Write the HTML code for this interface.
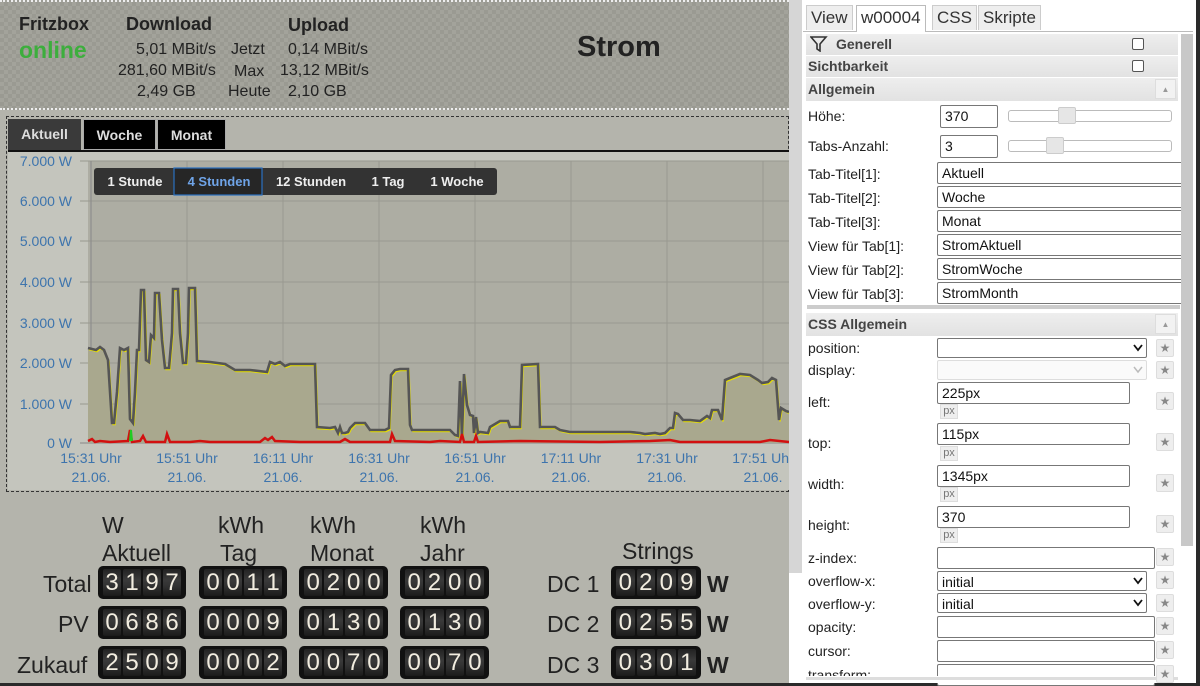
<!DOCTYPE html>
<html><head><meta charset="utf-8"><style>
*{box-sizing:border-box;margin:0;padding:0}
body{width:1200px;height:683px;overflow:hidden;background:#2a2a2a;font-family:"Liberation Sans",sans-serif;position:relative}
.abs{position:absolute}
#left{left:0;top:0;width:789px;height:683px;background:#b4b4ac}
#hdr{left:0;top:0;width:789px;height:110px;background-color:#a3a39b;background-image:linear-gradient(45deg,#9a9a92 25%,transparent 25%,transparent 75%,#9a9a92 75%),linear-gradient(45deg,#9a9a92 25%,transparent 25%,transparent 75%,#9a9a92 75%);background-size:8px 8px;background-position:0 0,4px 4px;border-top:2px dotted #eee;border-bottom:2px dotted #eee}
.t{position:absolute;white-space:nowrap;color:#222}
.b{font-weight:bold}
.tab{position:absolute;top:119px;height:31px;color:#ddd;font-weight:bold;font-size:14px;line-height:31px;text-align:center}
.cnt{position:absolute;height:33px;background:#111;border-radius:5px;display:flex;padding:3px 4px;gap:0}
.cnt span{flex:1;color:#f2ede0;font-size:24px;line-height:27px;text-align:center;background:linear-gradient(#222,#3a3a3a 40%,#333 60%,#1a1a1a);margin:0 1px;border-radius:2px}
.lbl{position:absolute;font-size:23px;color:#222;text-align:right;white-space:nowrap}
#rp{left:789px;top:0;width:407px;height:683px;background:#fff}
.rl{position:absolute;left:808px;font-size:14px;color:#222;white-space:nowrap}
.in{position:absolute;border:1px solid #777;border-radius:2px;background:#fff;font-size:14px;padding-left:4px;line-height:20px;height:22px;color:#111}
.sec{position:absolute;left:806px;width:372px;background:linear-gradient(#eee,#e2e2e2);font-weight:bold;font-size:14px;color:#444;padding-left:2px}
.star{position:absolute;left:1156px;width:18px;height:18px;border:1px solid #ddd;background:#eee;border-radius:2px;color:#888;font-size:12px;text-align:center;line-height:16px}
.px{position:absolute;left:940px;width:18px;height:15px;background:#eee;border:1px solid #ddd;font-size:11px;color:#777;text-align:center;line-height:13px}
.rtab{position:absolute;top:5px;height:25px;border:1px solid #ccc;border-bottom:none;background:#eee;font-size:17px;line-height:24px;padding:0 4px;color:#333}
</style></head><body>
<div id="left" class="abs"></div>
<div id="hdr" class="abs"></div>
<div class="t b" style="left:19px;top:14px;font-size:18px">Fritzbox</div>
<div class="t b" style="left:19px;top:37px;font-size:23px;color:#3dae3d">online</div>
<div class="t b" style="left:126px;top:14px;font-size:18px">Download</div>
<div class="t b" style="left:288px;top:15px;font-size:18px">Upload</div>
<div class="t" style="left:136px;top:41px;font-size:16px">5,01 MBit/s</div>
<div class="t" style="left:231px;top:41px;font-size:16px">Jetzt</div>
<div class="t" style="left:288px;top:41px;font-size:16px">0,14 MBit/s</div>
<div class="t" style="left:118px;top:62px;font-size:16px">281,60 MBit/s</div>
<div class="t" style="left:234px;top:63px;font-size:16px">Max</div>
<div class="t" style="left:280px;top:62px;font-size:16px">13,12 MBit/s</div>
<div class="t" style="left:137px;top:83px;font-size:16px">2,49 GB</div>
<div class="t" style="left:228px;top:83px;font-size:16px">Heute</div>
<div class="t" style="left:288px;top:83px;font-size:16px">2,10 GB</div>
<div class="t b" style="left:577px;top:31px;font-size:29px">Strom</div>
<div class="abs" style="left:6px;top:116px;width:783px;height:376px;border:1px dashed #333"></div>
<div class="tab" style="left:8px;width:73px;background:#3a3a3a">Aktuell</div>
<div class="tab" style="left:83px;width:73px;background:#000;border:1px solid #aaa">Woche</div>
<div class="tab" style="left:157px;width:69px;background:#000;border:1px solid #aaa">Monat</div>
<div class="abs" style="left:8px;top:150px;width:781px;height:2px;background:#111"></div>
<svg class="abs" style="left:8px;top:152px" width="781" height="338" viewBox="8 152 781 338">
<rect x="8" y="152" width="781" height="338" fill="#c4c5bd"/>
<rect x="88" y="161" width="701" height="282" fill="#adada3"/>
<g stroke="#999990" stroke-width="1">
<line x1="80" y1="161" x2="789" y2="161"/><line x1="80" y1="201" x2="789" y2="201"/><line x1="80" y1="241" x2="789" y2="241"/><line x1="80" y1="282" x2="789" y2="282"/><line x1="80" y1="323" x2="789" y2="323"/><line x1="80" y1="363" x2="789" y2="363"/><line x1="80" y1="404" x2="789" y2="404"/>
<line x1="187" y1="161" x2="187" y2="443"/><line x1="283" y1="161" x2="283" y2="443"/><line x1="379" y1="161" x2="379" y2="443"/><line x1="475" y1="161" x2="475" y2="443"/><line x1="571" y1="161" x2="571" y2="443"/><line x1="667" y1="161" x2="667" y2="443"/><line x1="763" y1="161" x2="763" y2="443"/>
</g>
<line x1="91" y1="161" x2="91" y2="443" stroke="#888" />
<line x1="80" y1="443" x2="789" y2="443" stroke="#888"/>
<path id="p" d="M88,348 L96,350 100,347 104,350 108,360 112,423 114,423 117,392 120,348 124,350 128,348 130,419 133,423 135,392 137,350 139,350 141,290 144,290 146,360 149,362 151,335 154,338 155,293 159,293 162,340 165,368 169,368 172,333 173,289 178,289 180,333 183,363 186,363 188,333 189,288 195,288 197,361 210,362 225,364 235,370 250,370 267,372 270,362 275,364 280,362 285,366 290,364 315,364 317,427 330,428 335,427 338,433 340,427 342,433 345,433 348,432 350,428 355,423 365,423 370,430 385,430 389,428 391,375 395,370 400,369 408,369 410,425 412,430 450,430 455,435 458,436 460,381 462,436 464,374 467,405 470,415 473,416 474,433 476,417 478,433 480,432 488,433 490,427 500,421 508,421 510,427 520,427 522,365 538,364 540,427 555,427 560,430 570,432 600,432 630,432 640,433 645,434 655,433 660,434 665,433 670,428 673,428 675,413 678,414 683,420 690,420 700,421 707,416 710,418 712,410 718,410 722,420 725,380 730,378 740,374 750,375 758,380 762,383 768,382 772,378 776,380 779,420 781,408 786,411 789,412" fill="none"/>
<path d="M88,348 L96,350 100,347 104,350 108,360 112,423 114,423 117,392 120,348 124,350 128,348 130,419 133,423 135,392 137,350 139,350 141,290 144,290 146,360 149,362 151,335 154,338 155,293 159,293 162,340 165,368 169,368 172,333 173,289 178,289 180,333 183,363 186,363 188,333 189,288 195,288 197,361 210,362 225,364 235,370 250,370 267,372 270,362 275,364 280,362 285,366 290,364 315,364 317,427 330,428 335,427 338,433 340,427 342,433 345,433 348,432 350,428 355,423 365,423 370,430 385,430 389,428 391,375 395,370 400,369 408,369 410,425 412,430 450,430 455,435 458,436 460,381 462,436 464,374 467,405 470,415 473,416 474,433 476,417 478,433 480,432 488,433 490,427 500,421 508,421 510,427 520,427 522,365 538,364 540,427 555,427 560,430 570,432 600,432 630,432 640,433 645,434 655,433 660,434 665,433 670,428 673,428 675,413 678,414 683,420 690,420 700,421 707,416 710,418 712,410 718,410 722,420 725,380 730,378 740,374 750,375 758,380 762,383 768,382 772,378 776,380 779,420 781,408 786,411 789,412 L789,443 L88,443Z" fill="#a9a88e"/>
<use href="#p" stroke="#e8e000" stroke-width="1.5" transform="translate(1,1.5)"/>
<use href="#p" stroke="#555" stroke-width="2.6"/>
<path d="M88,441 L92,439 95,442 100,441 110,442 128,441 130,430 132,442 140,441 143,436 146,442 165,442 167,434 170,442 190,442 200,441 210,442 260,442 265,438 268,440 272,437 275,441 300,442 340,442 345,439 350,442 390,442 392,434 395,441 430,442 440,441 460,442 462,434 464,442 474,442 476,436 478,442 520,441 600,442 650,441 670,440 680,442 760,442 770,440 789,442" fill="none" stroke="#d21010" stroke-width="2.5"/>
<path d="M130,441 L131,430 132,441" stroke="#2c2" stroke-width="2" fill="none"/>
<g fill="#3d74ad" font-size="14" font-family="Liberation Sans,sans-serif">
<text x="72" y="166" text-anchor="end">7.000 W</text><text x="72" y="206" text-anchor="end">6.000 W</text><text x="72" y="246" text-anchor="end">5.000 W</text><text x="72" y="287" text-anchor="end">4.000 W</text><text x="72" y="328" text-anchor="end">3.000 W</text><text x="72" y="368" text-anchor="end">2.000 W</text><text x="72" y="409" text-anchor="end">1.000 W</text><text x="72" y="448" text-anchor="end">0 W</text>
<g text-anchor="middle"><text x="91" y="463">15:31 Uhr</text><text x="91" y="482">21.06.</text><text x="187" y="463">15:51 Uhr</text><text x="187" y="482">21.06.</text><text x="283" y="463">16:11 Uhr</text><text x="283" y="482">21.06.</text><text x="379" y="463">16:31 Uhr</text><text x="379" y="482">21.06.</text><text x="475" y="463">16:51 Uhr</text><text x="475" y="482">21.06.</text><text x="571" y="463">17:11 Uhr</text><text x="571" y="482">21.06.</text><text x="667" y="463">17:31 Uhr</text><text x="667" y="482">21.06.</text><text x="763" y="463">17:51 Uhr</text><text x="763" y="482">21.06.</text></g>
</g>
<rect x="94" y="168" width="403" height="27" rx="3" fill="#333"/>
<rect x="174" y="168" width="88" height="27" fill="#262626" stroke="#2a70c0" stroke-width="1.2"/>
<g font-size="13" font-weight="bold" font-family="Liberation Sans,sans-serif" fill="#eee" text-anchor="middle">
<text x="135" y="186">1 Stunde</text><text x="219" y="186" fill="#6fa4e8">4 Stunden</text><text x="311" y="186">12 Stunden</text><text x="388" y="186">1 Tag</text><text x="457" y="186">1 Woche</text></g>
</svg>
<div class="lbl" style="left:102px;top:512px">W</div>
<div class="lbl" style="left:102px;top:540px">Aktuell</div>
<div class="lbl" style="left:218px;top:512px">kWh</div>
<div class="lbl" style="left:220px;top:540px">Tag</div>
<div class="lbl" style="left:310px;top:512px">kWh</div>
<div class="lbl" style="left:310px;top:540px">Monat</div>
<div class="lbl" style="left:420px;top:512px">kWh</div>
<div class="lbl" style="left:420px;top:540px">Jahr</div>
<div class="lbl" style="left:622px;top:538px">Strings</div>
<div class="lbl" style="left:43px;top:571px">Total</div>
<div class="lbl" style="left:58px;top:611px">PV</div>
<div class="lbl" style="left:17px;top:652px">Zukauf</div>
<div class="lbl" style="left:547px;top:571px">DC 1</div>
<div class="lbl" style="left:547px;top:611px">DC 2</div>
<div class="lbl" style="left:547px;top:652px">DC 3</div>
<div class="lbl b" style="left:707px;top:571px">W</div>
<div class="lbl b" style="left:707px;top:611px">W</div>
<div class="lbl b" style="left:707px;top:652px">W</div>
<div class="cnt" style="left:98px;top:566px;width:88px"><span>3</span><span>1</span><span>9</span><span>7</span></div>
<div class="cnt" style="left:199px;top:566px;width:88px"><span>0</span><span>0</span><span>1</span><span>1</span></div>
<div class="cnt" style="left:299px;top:566px;width:89px"><span>0</span><span>2</span><span>0</span><span>0</span></div>
<div class="cnt" style="left:400px;top:566px;width:89px"><span>0</span><span>2</span><span>0</span><span>0</span></div>
<div class="cnt" style="left:611px;top:566px;width:90px"><span>0</span><span>2</span><span>0</span><span>9</span></div>
<div class="cnt" style="left:98px;top:606px;width:88px"><span>0</span><span>6</span><span>8</span><span>6</span></div>
<div class="cnt" style="left:199px;top:606px;width:88px"><span>0</span><span>0</span><span>0</span><span>9</span></div>
<div class="cnt" style="left:299px;top:606px;width:89px"><span>0</span><span>1</span><span>3</span><span>0</span></div>
<div class="cnt" style="left:400px;top:606px;width:89px"><span>0</span><span>1</span><span>3</span><span>0</span></div>
<div class="cnt" style="left:611px;top:606px;width:90px"><span>0</span><span>2</span><span>5</span><span>5</span></div>
<div class="cnt" style="left:98px;top:646px;width:88px"><span>2</span><span>5</span><span>0</span><span>9</span></div>
<div class="cnt" style="left:199px;top:646px;width:88px"><span>0</span><span>0</span><span>0</span><span>2</span></div>
<div class="cnt" style="left:299px;top:646px;width:89px"><span>0</span><span>0</span><span>7</span><span>0</span></div>
<div class="cnt" style="left:400px;top:646px;width:89px"><span>0</span><span>0</span><span>7</span><span>0</span></div>
<div class="cnt" style="left:611px;top:646px;width:90px"><span>0</span><span>3</span><span>0</span><span>1</span></div>

<div id="rp" class="abs"></div>
<div class="abs" style="left:789px;top:0;width:13px;height:573px;background:#d6d6d6"></div>
<div class="abs" style="left:803px;top:31px;width:390px;height:1px;background:#bbb"></div>
<div class="rtab" style="left:806px">View</div>
<div class="rtab" style="left:856px;background:#fff;border-color:#bbb;height:27px">w00004</div>
<div class="rtab" style="left:932px">CSS</div>
<div class="rtab" style="left:978px">Skripte</div>
<div class="sec" style="top:34px;height:21px;line-height:21px;padding-left:30px">Generell</div>
<svg class="abs" style="left:810px;top:36px" width="18" height="16"><path d="M1,1 H16 L10,8 V15 L7,13 V8 Z" fill="none" stroke="#333" stroke-width="1.6"/></svg>
<div class="sec" style="top:56px;height:21px;line-height:21px">Sichtbarkeit</div>
<div class="sec" style="top:78px;height:23px;line-height:23px">Allgemein</div>
<div class="abs" style="left:1132px;top:38px;width:12px;height:12px;border:1px solid #555;border-radius:2px;background:#fff"></div>
<div class="abs" style="left:1132px;top:60px;width:12px;height:12px;border:1px solid #555;border-radius:2px;background:#fff"></div>
<div class="abs" style="left:1155px;top:79px;width:21px;height:20px;border:1px solid #ddd;background:#f2f2f2;color:#999;font-size:8px;text-align:center;line-height:20px">▲</div>
<div class="rl" style="top:108px">Höhe:</div>
<div class="in" style="left:940px;top:105px;width:58px;height:23px">370</div>
<div class="abs" style="left:1008px;top:110px;width:164px;height:12px;border:1px solid #bbb;border-radius:3px"></div>
<div class="abs" style="left:1058px;top:107px;width:18px;height:17px;border:1px solid #ccc;background:#e6e6e6;border-radius:2px"></div>
<div class="rl" style="top:138px">Tabs-Anzahl:</div>
<div class="in" style="left:940px;top:135px;width:58px;height:23px">3</div>
<div class="abs" style="left:1008px;top:140px;width:164px;height:12px;border:1px solid #bbb;border-radius:3px"></div>
<div class="abs" style="left:1046px;top:137px;width:18px;height:17px;border:1px solid #ccc;background:#e6e6e6;border-radius:2px"></div>
<div class="rl" style="top:166px">Tab-Titel[1]:</div><div class="in" style="left:937px;top:162px;width:246px">Aktuell</div>
<div class="rl" style="top:190px">Tab-Titel[2]:</div><div class="in" style="left:937px;top:186px;width:246px">Woche</div>
<div class="rl" style="top:214px">Tab-Titel[3]:</div><div class="in" style="left:937px;top:210px;width:246px">Monat</div>
<div class="rl" style="top:238px">View für Tab[1]:</div><div class="in" style="left:937px;top:234px;width:246px">StromAktuell</div>
<div class="rl" style="top:262px">View für Tab[2]:</div><div class="in" style="left:937px;top:258px;width:246px">StromWoche</div>
<div class="rl" style="top:286px">View für Tab[3]:</div><div class="in" style="left:937px;top:282px;width:246px">StromMonth</div>
<div class="abs" style="left:807px;top:305px;width:373px;height:4px;background:#ccc"></div>
<div class="abs" style="left:1181px;top:34px;width:12px;height:512px;background:#c8c8c8"></div>
<div class="sec" style="top:313px;height:23px;line-height:23px">CSS Allgemein</div>
<div class="abs" style="left:1155px;top:314px;width:21px;height:20px;border:1px solid #ddd;background:#f2f2f2;color:#999;font-size:8px;text-align:center;line-height:20px">▲</div>
<div class="rl" style="top:340px">position:</div><div class="in" style="left:937px;top:338px;width:210px;height:20px">&nbsp;</div>
<div class="rl" style="top:362px">display:</div><div class="in" style="left:937px;top:360px;width:210px;height:20px;border-color:#ddd;background:#fafafa"></div>
<div class="rl" style="top:394px">left:</div><div class="in" style="left:937px;top:382px;width:193px">225px</div><div class="px" style="top:404px">px</div>
<div class="rl" style="top:435px">top:</div><div class="in" style="left:937px;top:423px;width:193px">115px</div><div class="px" style="top:446px">px</div>
<div class="rl" style="top:476px">width:</div><div class="in" style="left:937px;top:465px;width:193px">1345px</div><div class="px" style="top:487px">px</div>
<div class="rl" style="top:517px">height:</div><div class="in" style="left:937px;top:506px;width:193px">370</div><div class="px" style="top:528px">px</div>
<div class="rl" style="top:550px">z-index:</div><div class="in" style="left:937px;top:547px;width:218px"></div>
<div class="rl" style="top:573px">overflow-x:</div><div class="in" style="left:937px;top:571px;width:210px;height:20px">initial</div>
<div class="rl" style="top:596px">overflow-y:</div><div class="in" style="left:937px;top:593px;width:210px;height:20px">initial</div>
<div class="rl" style="top:619px">opacity:</div><div class="in" style="left:937px;top:616px;width:218px"></div>
<div class="rl" style="top:643px">cursor:</div><div class="in" style="left:937px;top:640px;width:218px"></div>
<div class="rl" style="top:667px">transform:</div><div class="in" style="left:937px;top:664px;width:218px"></div>
<div class="abs" style="left:802px;top:676px;width:394px;height:7px;background:#fff"></div>
<div class="abs" style="left:806px;top:677px;width:372px;height:3px;background:#ddd"></div>
<div class="star" style="top:339px">★</div><div class="star" style="top:361px">★</div><div class="star" style="top:392px">★</div><div class="star" style="top:433px">★</div><div class="star" style="top:474px">★</div><div class="star" style="top:515px">★</div><div class="star" style="top:548px">★</div><div class="star" style="top:571px">★</div><div class="star" style="top:594px">★</div><div class="star" style="top:617px">★</div><div class="star" style="top:641px">★</div><div class="star" style="top:665px">★</div>
<svg class="abs" style="left:1133px;top:344px" width="10" height="8"><path d="M1,1 L5,6 L9,1" fill="none" stroke="#111" stroke-width="1.8"/></svg>
<svg class="abs" style="left:1133px;top:366px" width="10" height="8"><path d="M1,1 L5,6 L9,1" fill="none" stroke="#bbb" stroke-width="1.5"/></svg>
<svg class="abs" style="left:1133px;top:577px" width="10" height="8"><path d="M1,1 L5,6 L9,1" fill="none" stroke="#111" stroke-width="1.8"/></svg>
<svg class="abs" style="left:1133px;top:599px" width="10" height="8"><path d="M1,1 L5,6 L9,1" fill="none" stroke="#111" stroke-width="1.8"/></svg>
<div class="abs" style="left:1196px;top:0;width:4px;height:683px;background:#2a2a2a"></div>
</body></html>
